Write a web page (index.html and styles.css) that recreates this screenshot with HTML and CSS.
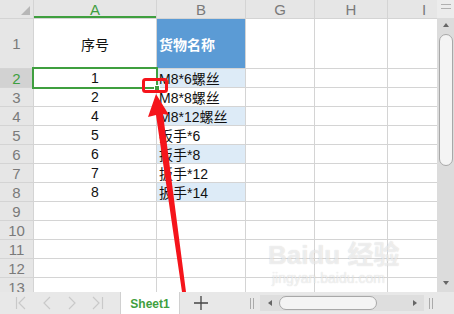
FILE: index.html
```html
<!DOCTYPE html>
<html lang="en">
<head>
    <meta charset="UTF-8">
    <meta name="viewport" content="width=device-width, initial-scale=1.0">
    <title>Sheet1</title>
    <link rel="stylesheet" href="styles.css">
</head>
<body>
    <div class="app">
        <div class="main">
            <div class="sheet">
                <div class="hd corner"></div>
                <div class="hd col-on">A</div>
                <div class="hd">B</div>
                <div class="hd">G</div>
                <div class="hd">H</div>
                <div class="hd col-i">I</div>

                <div class="hd">1</div>
                <div class="c mid">序号</div>
                <div class="c title">货物名称</div>
                <div class="c"></div><div class="c"></div><div class="c"></div>

                <div class="hd row-on">2</div>
                <div class="c num sel">1</div>
                <div class="c blue">M8*6螺丝</div>
                <div class="c"></div><div class="c"></div><div class="c"></div>

                <div class="hd">3</div>
                <div class="c num">2</div>
                <div class="c txt">M8*8螺丝</div>
                <div class="c"></div><div class="c"></div><div class="c"></div>

                <div class="hd">4</div>
                <div class="c num">4</div>
                <div class="c blue">M8*12螺丝</div>
                <div class="c"></div><div class="c"></div><div class="c"></div>

                <div class="hd">5</div>
                <div class="c num">5</div>
                <div class="c txt">扳手*6</div>
                <div class="c"></div><div class="c"></div><div class="c"></div>

                <div class="hd">6</div>
                <div class="c num">6</div>
                <div class="c blue">扳手*8</div>
                <div class="c"></div><div class="c"></div><div class="c"></div>

                <div class="hd">7</div>
                <div class="c num">7</div>
                <div class="c txt">扳手*12</div>
                <div class="c"></div><div class="c"></div><div class="c"></div>

                <div class="hd">8</div>
                <div class="c num">8</div>
                <div class="c blue">扳手*14</div>
                <div class="c"></div><div class="c"></div><div class="c"></div>

                <div class="hd">9</div>
                <div class="c"></div><div class="c"></div><div class="c"></div><div class="c"></div><div class="c"></div>
                <div class="hd">10</div>
                <div class="c"></div><div class="c"></div><div class="c"></div><div class="c"></div><div class="c"></div>
                <div class="hd">11</div>
                <div class="c"></div><div class="c"></div><div class="c"></div><div class="c"></div><div class="c"></div>
                <div class="hd">12</div>
                <div class="c"></div><div class="c"></div><div class="c"></div><div class="c"></div><div class="c"></div>
                <div class="hd">13</div>
                <div class="c"></div><div class="c"></div><div class="c"></div><div class="c"></div><div class="c"></div>
            </div>

            <div class="vbar">
                <div class="vtop"><span class="bars"></span></div>
                <div class="vtrack">
                    <span class="tri up"></span>
                    <span class="vthumb"></span>
                    <span class="tri down"></span>
                </div>
            </div>
        </div>

        <div class="tabs">
            <svg class="nav" width="120" height="22" viewBox="0 0 120 22">
                <g fill="none" stroke="#c9c9c9" stroke-width="1.2">
                    <line x1="16.5" y1="5" x2="16.5" y2="17"/>
                    <polyline points="25,5 19,11 25,17"/>
                    <polyline points="50,5 44,11 50,17"/>
                    <polyline points="69,5 75,11 69,17"/>
                    <polyline points="93,5 99,11 93,17"/>
                    <line x1="102.5" y1="5" x2="102.5" y2="17"/>
                </g>
            </svg>
            <div class="tab">Sheet1</div>
            <div class="add">
                <svg width="14" height="14" viewBox="0 0 14 14">
                    <path d="M7 0v14M0 7h14" stroke="#444" stroke-width="1.3"/>
                </svg>
            </div>
            <div class="hbar">
                <span class="grip"></span>
                <div class="htrack">
                    <span class="tri left"></span>
                    <span class="hthumb"></span>
                    <span class="tri right"></span>
                </div>
                <span class="grip"></span>
            </div>
        </div>

        <div class="mark">
            <div class="mark-big">Bai<span class="paw">d</span>u 经验</div>
            <div class="mark-url">jingyan.baidu.com</div>
        </div>

        <svg class="note" width="454" height="314" viewBox="0 0 454 314">
            <rect x="143.5" y="79.5" width="23" height="12" rx="2" fill="none" stroke="#f5141b" stroke-width="3"/>
            <polygon points="156,94 169,115 163,114 186,292 182,292 156,115 148,117" fill="#f5141b"/>
        </svg>
    </div>
</body>
</html>
```

FILE: styles.css
```css
body { margin: 0; background: #fff; font-family: "Liberation Sans", "Noto Sans CJK SC", sans-serif; }
.app { width: 454px; height: 314px; position: relative; overflow: hidden; display: flex; flex-direction: column; }
.main { height: 292px; display: flex; overflow: hidden; }

.sheet { width: 437px; display: grid; grid-template-columns: 33px 122px 88px 68px 72px 49px; grid-template-rows: 18px 49px; grid-auto-rows: 18px; gap: 1px; background: #d4d4d4; align-content: start; overflow: hidden; }
.hd { background: #e6e6e6; color: #7a7a7a; font-size: 15px; display: flex; align-items: center; justify-content: center; }
.corner { position: relative; }
.corner::after { content: ""; position: absolute; right: 3px; bottom: 3px; border-style: solid; border-width: 0 0 9px 9px; border-color: transparent transparent #b7b7b7 transparent; }
.col-on { color: #3f9f3f; box-shadow: inset 0 -2px #3f9f3f; }
.row-on { background: #d2d2d2; color: #3f9f3f; }
.col-i { justify-content: flex-start; padding-left: 34px; }

.c { background: #fff; color: #111; font-size: 14px; display: flex; align-items: center; white-space: nowrap; }
.mid { justify-content: center; font-family: "Noto Sans CJK SC", sans-serif; }
.num { justify-content: center; }
.txt, .blue { padding-left: 2px; font-family: "Liberation Sans", "Noto Sans CJK SC", sans-serif; }
.blue { background: #ddebf7; }
.title { background: #5b9bd5; color: #fff; font-weight: bold; padding-left: 2px; font-family: "Noto Sans CJK SC", sans-serif; }
.sel { position: relative; z-index: 2; outline: 2px solid #3f9f3f; }
.sel::after { content: ""; position: absolute; right: -4px; bottom: -4px; width: 4px; height: 4px; background: #3f9f3f; border: 1px solid #fff; }

.vbar { width: 17px; background: #e4e4e4; display: flex; flex-direction: column; }
.vtop { height: 18px; background: #ececec; display: flex; justify-content: center; padding-top: 4px; box-sizing: border-box; }
.bars { width: 10px; height: 3px; border-top: 1px solid #b0b0b0; border-bottom: 1px solid #b0b0b0; }
.vtrack { flex: 1; background: #dcdcdc; display: flex; flex-direction: column; align-items: center; padding: 5px 0 7px; }
.vthumb { width: 12px; height: 130px; margin-top: 7px; background: #f4f4f4; border: 1px solid #a8a8a8; border-radius: 7px; }
.tri { width: 0; height: 0; border-style: solid; }
.up { border-width: 0 3px 4px 3px; border-color: transparent transparent #666 transparent; }
.down { margin-top: auto; border-width: 4px 3px 0 3px; border-color: #666 transparent transparent transparent; }

.tabs { height: 22px; background: #e8e8e8; display: flex; align-items: center; }
.nav { display: block; }
.tab { width: 60px; height: 22px; background: #fff; border-left: 1px solid #d0d0d0; border-right: 1px solid #d0d0d0; box-sizing: border-box; color: #3f9f3f; font-weight: bold; font-size: 12px; display: flex; align-items: center; justify-content: center; padding-top: 2px; }
.add { width: 42px; display: flex; justify-content: center; align-items: center; }
.add svg { display: block; }
.hbar { margin-left: 28px; display: flex; align-items: center; }
.grip { width: 2px; height: 11px; border-left: 1px solid #aaa; border-right: 1px solid #aaa; }
.htrack { width: 164px; height: 16px; margin: 0 5px 0 6px; background: #dedede; display: flex; align-items: center; padding: 0 7px 0 8px; box-sizing: border-box; }
.hthumb { width: 96px; height: 12px; margin-left: 7px; background: #f4f4f4; border: 1px solid #a8a8a8; border-radius: 7px; }
.left { border-width: 3px 4px 3px 0; border-color: transparent #666 transparent transparent; }
.right { margin-left: auto; border-width: 3px 0 3px 4px; border-color: transparent transparent transparent #666; }

.mark { position: absolute; left: 268px; top: 240px; z-index: 5; color: rgba(255, 255, 255, 0.6); text-shadow: 0 0 1px rgba(0, 0, 0, 0.18); pointer-events: none; }
.mark-big { font-size: 26px; font-weight: bold; line-height: 30px; font-family: "Liberation Sans", "Noto Sans CJK SC", sans-serif; }
.mark-url { font-size: 14px; line-height: 16px; margin-left: 4px; }
.note { position: absolute; left: 0; top: 0; z-index: 10; pointer-events: none; }
```
